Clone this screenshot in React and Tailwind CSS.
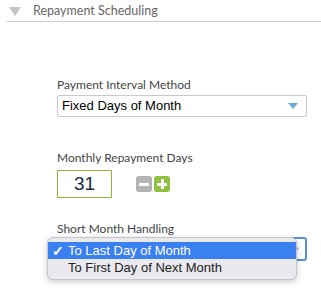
import React from "react";

export default function App() {
  return (
    <div className="w-[321px] h-[290px] bg-white relative overflow-hidden" style={{ fontFamily: "Lato, 'Liberation Sans', sans-serif" }}>
      <div className="ml-[7px] h-[22px] border-b border-[#c8c8c8] flex items-center">
        <svg width="12" height="9" viewBox="0 0 12 9" className="ml-[2px] mt-[2px]">
          <polygon points="0,0 12,0 6,9" fill="#c4c4c4" />
        </svg>
        <span className="ml-[12px] text-[12.5px] text-[#666] mt-[1px]">Repayment Scheduling</span>
      </div>

      <div className="pl-[57px] pr-[14px]">
        <div className="mt-[55px] text-[12px] text-[#444] leading-[15px]">Payment Interval Method</div>
        <div className="mt-[3px] h-[22px] w-[250px] border border-[#c9c9c9] rounded-[2px] flex items-center justify-between pl-[4px] pr-[8px]">
          <span className="text-[13px] text-black" style={{ fontFamily: "'Liberation Sans', Arial, sans-serif" }}>Fixed Days of Month</span>
          <svg width="10" height="6" viewBox="0 0 10 6"><polygon points="0,0 10,0 5,6" fill="#6aaad8" /></svg>
        </div>

        <div className="mt-[33px] text-[12px] text-[#444] leading-[15px]">Monthly Repayment Days</div>
        <div className="mt-[5px] flex items-center">
          <div className="w-[55px] h-[28px] border-[1.5px] border-[#8cb83a] flex items-center justify-center text-[19px] text-[#1b2a3c]" style={{ fontFamily: "'Liberation Sans', Arial, sans-serif" }}>31</div>
          <div className="ml-[24px] w-[16px] h-[16px] rounded-[3px] bg-[#b3b3b3] flex items-center justify-center">
            <div className="w-[10px] h-[3px] bg-white" />
          </div>
          <div className="ml-[2px] w-[16px] h-[16px] rounded-[3px] bg-[#8dc13f] flex items-center justify-center relative">
            <div className="w-[10px] h-[3px] bg-white" />
            <div className="absolute w-[3px] h-[10px] bg-white" />
          </div>
        </div>

        <div className="mt-[23px] text-[12px] text-[#444] leading-[15px]">Short Month Handling</div>
        <div className="mt-[1px] h-[24px] w-[250px] border-[2px] border-[#5a8fe0] rounded-[3px] flex items-center justify-end pr-[6px]">
          <span className="text-[9px] text-[#888]">▾</span>
        </div>
      </div>

      <div className="absolute left-[47px] top-[237px] w-[250px] h-[43px] rounded-[6px] bg-[#e9e9ee] border border-[#c4c4c8] shadow-[0_2px_6px_rgba(0,0,0,0.2)] py-[4px] text-[13px]" style={{ fontFamily: "'Liberation Sans', Arial, sans-serif" }}>
        <div className="h-[17px] bg-[#3a80f0] text-white flex items-center">
          <span className="w-[20px] pl-[4px] text-[14px] font-bold leading-none">✓</span>
          <span>To Last Day of Month</span>
        </div>
        <div className="h-[17px] text-[#222] flex items-center">
          <span className="w-[20px]" />
          <span>To First Day of Next Month</span>
        </div>
      </div>
    </div>
  );
}
